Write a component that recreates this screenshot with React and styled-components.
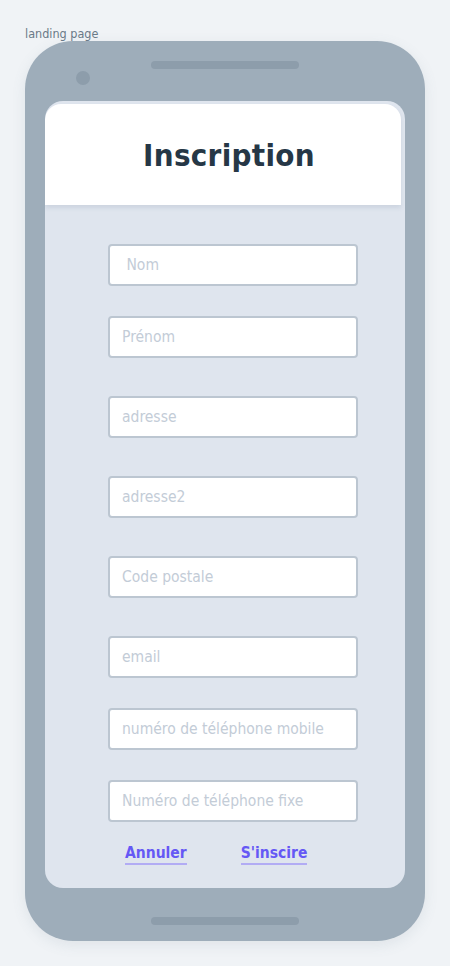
import styled, { createGlobalStyle } from "styled-components";

const GlobalStyle = createGlobalStyle`
  html, body {
    margin: 0;
    padding: 0;
    background: #f0f3f6;
  }
  body {
    font-family: "DejaVu Sans Condensed", "DejaVu Sans", sans-serif;
  }
  * {
    box-sizing: border-box;
  }
`;

const Page = styled.div`
  width: 450px;
  height: 966px;
  padding: 26px 0 0 25px;
`;

const PageLabel = styled.div`
  font-size: 12.5px;
  line-height: 15px;
  color: #6b7a88;
`;

const Phone = styled.div`
  position: relative;
  width: 400px;
  height: 900px;
  background: #9eadba;
  border-radius: 48px;
  box-shadow: 0 4px 14px rgba(100, 120, 140, 0.12);
  display: flex;
  flex-direction: column;
  align-items: center;
  padding-top: 20px;
`;

const Speaker = styled.div`
  width: 148px;
  height: 8px;
  border-radius: 4px;
  background: #8d9dab;
`;

const Camera = styled.div`
  position: absolute;
  left: 51px;
  top: 30px;
  width: 14px;
  height: 14px;
  border-radius: 50%;
  background: #8d9dab;
`;

const Screen = styled.div`
  width: 360px;
  height: 787px;
  margin-top: 32px;
  background: #dfe5ee;
  border-radius: 18px;
  overflow: hidden;
  padding-top: 3px;
  display: flex;
  flex-direction: column;
`;

const Header = styled.header`
  width: 356px;
  height: 101px;
  background: #fff;
  border-radius: 16px 16px 0 0;
  box-shadow: 0 3px 4px rgba(120, 140, 160, 0.18);
  display: flex;
  align-items: center;
  justify-content: center;
  padding-left: 12px;
`;

const Title = styled.h1`
  margin: 0;
  font-size: 31px;
  font-weight: 700;
  color: #263746;
  letter-spacing: 0.3px;
`;

const Form = styled.form`
  display: flex;
  flex-direction: column;
  padding: 39px 0 0 63px;
`;

const Field = styled.input`
  width: 250px;
  height: 42px;
  margin-top: ${(p) => p.$gap}px;
  border: 2px solid #bcc6d1;
  border-radius: 4px;
  background: #fff;
  padding: 0 12px;
  font-family: inherit;
  font-size: 15.5px;
  color: #263746;
  outline: none;

  &::placeholder {
    color: #c3ccd7;
  }
`;

const Actions = styled.div`
  display: flex;
  gap: 54px;
  padding: 22px 0 0 17px;
`;

const LinkButton = styled.button`
  border: 0;
  background: none;
  padding: 0 0 1px;
  font-family: inherit;
  font-size: 15.5px;
  font-weight: 700;
  color: #6558f5;
  border-bottom: 2px solid #b2acf4;
  cursor: pointer;
  line-height: 18px;
`;

const BottomBar = styled.div`
  width: 148px;
  height: 8px;
  border-radius: 4px;
  background: #8d9dab;
  margin-top: 29px;
`;

const fields = [
  { ph: " Nom", gap: 0 },
  { ph: "Prénom", gap: 30 },
  { ph: "adresse", gap: 38 },
  { ph: "adresse2", gap: 38 },
  { ph: "Code postale", gap: 38 },
  { ph: "email", gap: 38 },
  { ph: "numéro de téléphone mobile", gap: 30 },
  { ph: "Numéro de téléphone fixe", gap: 30 },
];

export default function App() {
  return (
    <>
      <GlobalStyle />
      <Page>
        <PageLabel>landing page</PageLabel>
        <Phone>
          <Speaker />
          <Camera />
          <Screen>
            <Header>
              <Title>Inscription</Title>
            </Header>
            <Form onSubmit={(e) => e.preventDefault()}>
              {fields.map((f) => (
                <Field key={f.ph} placeholder={f.ph} $gap={f.gap} />
              ))}
              <Actions>
                <LinkButton type="button">Annuler</LinkButton>
                <LinkButton type="submit">S'inscire</LinkButton>
              </Actions>
            </Form>
          </Screen>
          <BottomBar />
        </Phone>
      </Page>
    </>
  );
}
